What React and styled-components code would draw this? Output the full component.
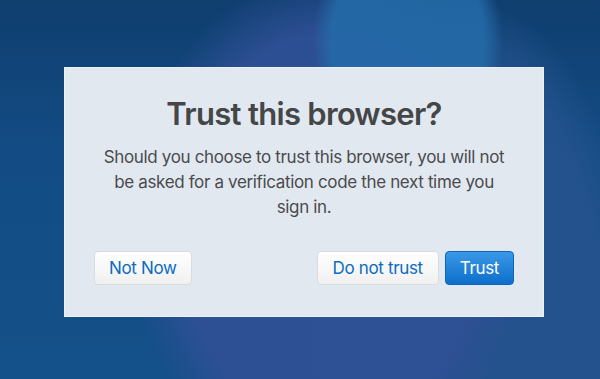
import React from "react";
import styled, { createGlobalStyle } from "styled-components";

const Global = createGlobalStyle`
  html, body { margin: 0; padding: 0; }
  body {
    width: 600px;
    height: 379px;
    overflow: hidden;
    font-family: Inter, "Noto Sans", sans-serif;
    background-color: #134c84;
    background-image:
      radial-gradient(ellipse 95px 120px at 408px 40px, rgba(36, 108, 170, 0.85) 0%, rgba(36, 108, 170, 0.85) 80%, rgba(36,108,170,0) 100%),
      radial-gradient(ellipse 200px 260px at 330px 230px, rgba(48, 80, 150, 0.9) 0%, rgba(48, 80, 150, 0.9) 75%, rgba(48,80,150,0) 100%),
      radial-gradient(ellipse 170px 330px at 470px 330px, rgba(36, 82, 140, 0.9) 0%, rgba(36, 82, 140, 0.9) 80%, rgba(36,82,140,0) 100%),
      linear-gradient(180deg, #0f3e6f 0%, #134c84 40%, #145089 100%);
  }
`;

const Page = styled.div`
  width: 600px;
  height: 379px;
  box-sizing: border-box;
  padding: 67px 0 0 64px;
`;

const Dialog = styled.section`
  width: 480px;
  height: 250px;
  box-sizing: border-box;
  background: #e2e8f0;
  border: 1px solid #edf1f7;
  padding: 27px 29px 0;
  display: flex;
  flex-direction: column;
  align-items: center;
`;

const Title = styled.h1`
  margin: 0;
  font-size: 31px;
  line-height: 38px;
  font-weight: 600;
  color: #444648;
  letter-spacing: -0.7px;
`;

const Body = styled.p`
  margin: 12px 0 0;
  width: 412px;
  text-align: center;
  font-size: 17px;
  line-height: 25px;
  font-weight: 400;
  color: #4a4b4d;
  letter-spacing: -0.35px;
`;

const Actions = styled.div`
  align-self: stretch;
  margin-top: 31px;
  display: flex;
  align-items: center;
  justify-content: space-between;
`;

const Group = styled.div`
  display: flex;
  gap: 6px;
`;

const Button = styled.button`
  height: 34px;
  box-sizing: border-box;
  padding: 0 ${(p) => p.$pad}px;
  border-radius: 4px;
  font-family: Inter, "Noto Sans", sans-serif;
  font-size: 17px;
  font-weight: 400;
  letter-spacing: -0.35px;
  cursor: pointer;
  color: ${(p) => (p.$primary ? "#ffffff" : "#0a6cc2")};
  border: 1px solid ${(p) => (p.$primary ? "#0d66bb" : "#d9dcdf")};
  background: ${(p) =>
    p.$primary
      ? "linear-gradient(180deg, #3a98e6 0%, #0c6fcb 100%)"
      : "linear-gradient(180deg, #ffffff 0%, #f0f0f0 100%)"};
`;

export default function App() {
  return (
    <>
      <Global />
      <Page>
        <Dialog>
          <Title>Trust this browser?</Title>
          <Body>
            Should you choose to trust this browser, you will not be asked for a
            verification code the next time you sign in.
          </Body>
          <Actions>
            <Button $pad={14}>Not Now</Button>
            <Group>
              <Button $pad={15}>Do not trust</Button>
              <Button $primary $pad={14}>Trust</Button>
            </Group>
          </Actions>
        </Dialog>
      </Page>
    </>
  );
}
